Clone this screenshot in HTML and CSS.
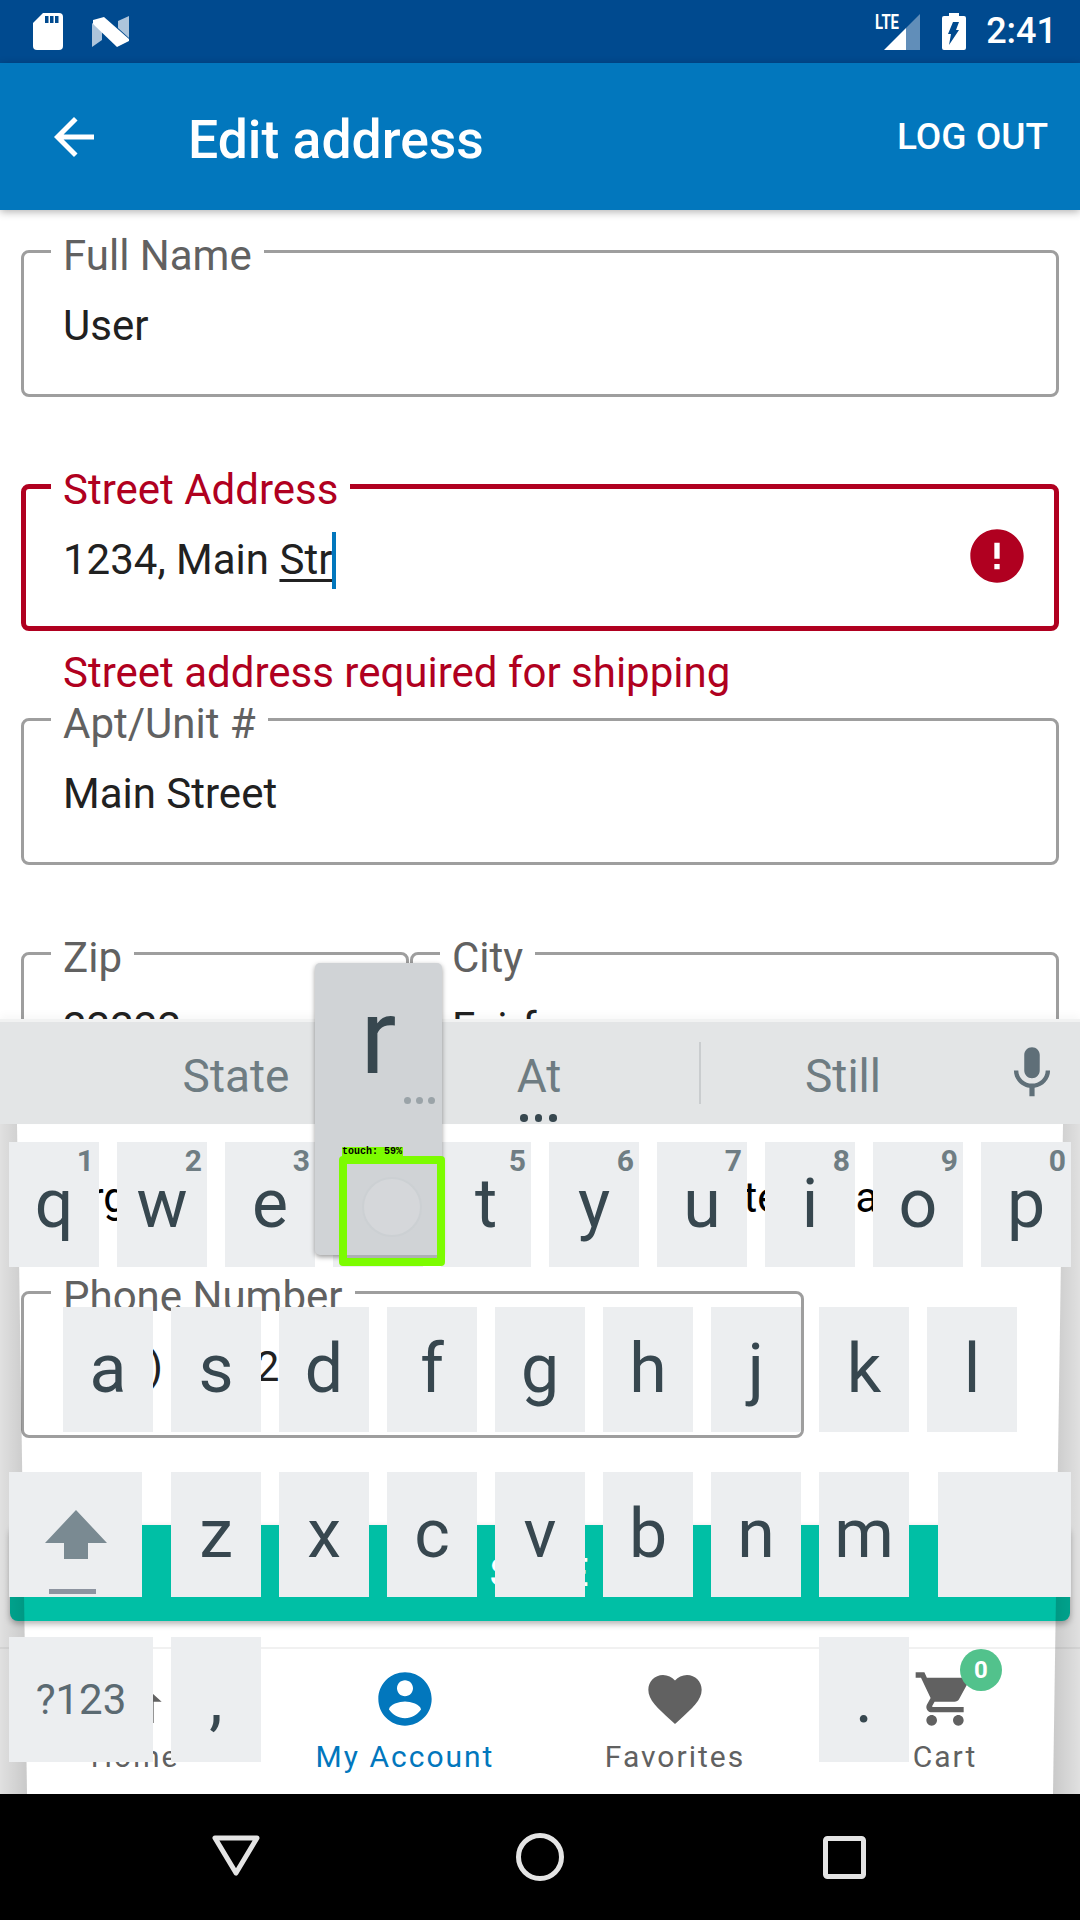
FILE: index.html
```html
<!DOCTYPE html>
<html lang="en">
<head>
<meta charset="utf-8">
<title>Edit address</title>
<link rel="stylesheet" href="styles.css">
</head>
<body>
<div class="screen">
  <div class="status">
    <svg class="ic-sd" viewBox="0 0 30 37"><path fill="#fff" d="M10 0h16a4 4 0 0 1 4 4v29a4 4 0 0 1-4 4H4a4 4 0 0 1-4-4V10z"/><path fill="#004a8f" d="M12 3h3.5v7H12zM17 3h3.5v7H17zM22 3h3.5v7H22z"/></svg>
    <svg class="ic-n" viewBox="0 0 37 31"><polygon fill="#fff" opacity=".68" points="0,7 10,14 10,24 0,31"/><polygon fill="#fff" opacity=".68" points="26,5 37,0 37,22 26,12"/><polygon fill="#fff" points="1,4 12,1 37,23 37,25 25,31 1,8"/></svg>
    <div class="status-right">
      <svg class="ic-lte" viewBox="0 0 45 38"><text x="0" y="16" textLength="24" lengthAdjust="spacingAndGlyphs" class="lte-text">LTE</text><polygon fill="#fff" points="9,37 31,15 31,37"/><polygon fill="#fff" opacity=".38" points="31,15 45,1 45,37 31,37"/></svg>
      <svg class="ic-bat" viewBox="0 0 24 37"><path fill="#fff" d="M7 0h10v3h5a2 2 0 0 1 2 2v30a2 2 0 0 1-2 2H2a2 2 0 0 1-2-2V5a2 2 0 0 1 2-2h5z"/><polygon fill="#004a8f" points="11,9 17,9 14,17 17,17 7,32 9,21 6,21"/></svg>
      <span class="time">2:41</span>
    </div>
  </div>

  <header class="appbar">
    <svg class="ic-back" viewBox="0 0 24 24"><path fill="#fff" d="M20 11H7.83l5.59-5.59L12 4l-8 8 8 8 1.41-1.41L7.83 13H20v-2z"/></svg>
    <h1 class="title">Edit address</h1>
    <span class="logout">LOG OUT</span>
  </header>

  <main class="form">
    <div class="field"><span class="label">Full Name</span><div class="value">User</div></div>
    <div class="field field-error">
      <span class="label">Street Address</span>
      <div class="value">1234, Main <span class="composing">Str<span class="caret"></span></span></div>
      <svg class="ic-error" viewBox="0 0 24 24"><path fill="#b00020" d="M12 2C6.48 2 2 6.48 2 12s4.48 10 10 10 10-4.48 10-10S17.52 2 12 2zm1 15h-2v-2h2v2zm0-4h-2V7h2v6z"/></svg>
    </div>
    <div class="error-text">Street address required for shipping</div>
    <div class="field"><span class="label">Apt/Unit #</span><div class="value">Main Street</div></div>
    <div class="pair">
      <div class="field field-zip"><span class="label">Zip</span><div class="value">22222</div></div>
      <div class="field field-city"><span class="label">City</span><div class="value">Fairfax</div></div>
    </div>
    <div class="plain-row"><span>Argyle</span><span>States in a</span></div>
    <div class="field field-phone"><span class="label">Phone Number</span><div class="value">(222) 222-222</div></div>
    <button class="save">SAVE</button>
  </main>

  <nav class="tabs">
    <div class="tab">
      <svg class="tab-ic" viewBox="0 0 24 24"><path d="M10 21v-6h4v6h5v-8h3L12 4 2 13h3v8z"/></svg>
      <span>Home</span>
    </div>
    <div class="tab tab-active">
      <svg class="tab-ic" viewBox="0 0 24 24"><path d="M12 2C6.48 2 2 6.48 2 12s4.48 10 10 10 10-4.48 10-10S17.52 2 12 2zm0 3c1.66 0 3 1.34 3 3s-1.34 3-3 3-3-1.34-3-3 1.34-3 3-3zm0 14.2c-2.5 0-4.71-1.28-6-3.22.03-1.99 4-3.08 6-3.08 1.99 0 5.97 1.09 6 3.08-1.29 1.94-3.5 3.22-6 3.22z"/></svg>
      <span>My Account</span>
    </div>
    <div class="tab">
      <svg class="tab-ic" viewBox="0 0 24 24"><path d="M12 21.35l-1.45-1.32C5.4 15.36 2 12.28 2 8.5 2 5.42 4.42 3 7.5 3c1.74 0 3.41.81 4.5 2.09C13.09 3.81 14.76 3 16.5 3 19.58 3 22 5.42 22 8.5c0 3.78-3.4 6.86-8.55 11.54L12 21.35z"/></svg>
      <span>Favorites</span>
    </div>
    <div class="tab">
      <svg class="tab-ic" viewBox="0 0 24 24"><path d="M7 18c-1.1 0-1.99.9-1.99 2S5.9 22 7 22s2-.9 2-2-.9-2-2-2zM1 2v2h2l3.6 7.59-1.35 2.45c-.16.28-.25.61-.25.96 0 1.1.9 2 2 2h12v-2H7.42c-.14 0-.25-.11-.25-.25l.03-.12.9-1.63h7.45c.75 0 1.41-.41 1.75-1.03l3.58-6.49c.08-.14.12-.31.12-.48 0-.55-.45-1-1-1H5.21l-.94-2H1zm16 16c-1.1 0-1.99.9-1.99 2s.89 2 1.99 2 2-.9 2-2-.9-2-2-2z"/></svg>
      <span>Cart</span>
      <span class="badge">0</span>
    </div>
  </nav>

  <div class="keyboard">
    <div class="edge edge-left"></div>
    <div class="edge edge-right"></div>
    <div class="suggest">
      <span class="sug sug-a">State</span>
      <span class="sug sug-b">At<i class="sug-dots"><b></b><b></b><b></b></i></span>
      <span class="sug-div"></span>
      <span class="sug sug-c">Still</span>
      <span class="sug-mic"><svg viewBox="0 0 24 24"><path d="M12 14c1.66 0 2.99-1.34 2.99-3L15 5c0-1.66-1.34-3-3-3S9 3.34 9 5v6c0 1.66 1.34 3 3 3zm5.3-3c0 3-2.54 5.1-5.3 5.1S6.7 14 6.7 11H5c0 3.41 2.72 6.23 6 6.72V21h2v-3.28c3.28-.48 6-3.3 6-6.72h-1.7z"/></svg></span>
    </div>
    <div class="keys">
      <div class="row row-1">
        <div class="key">q<span class="hint">1</span></div>
        <div class="key">w<span class="hint">2</span></div>
        <div class="key">e<span class="hint">3</span></div>
        <div class="key">r<span class="hint">4</span></div>
        <div class="key">t<span class="hint">5</span></div>
        <div class="key">y<span class="hint">6</span></div>
        <div class="key">u<span class="hint">7</span></div>
        <div class="key">i<span class="hint">8</span></div>
        <div class="key">o<span class="hint">9</span></div>
        <div class="key">p<span class="hint">0</span></div>
      </div>
      <div class="row row-2">
        <div class="key">a</div><div class="key">s</div><div class="key">d</div><div class="key">f</div><div class="key">g</div><div class="key">h</div><div class="key">j</div><div class="key">k</div><div class="key">l</div>
      </div>
      <div class="row row-3">
        <div class="key key-shift">
          <svg class="ic-shift" viewBox="0 0 62 49"><polygon fill="#7a8a92" points="31,0 62,33 43,33 43,49 19,49 19,33 0,33"/></svg>
          <span class="shift-line"></span>
        </div>
        <div class="key">z</div><div class="key">x</div><div class="key">c</div><div class="key">v</div><div class="key">b</div><div class="key">n</div><div class="key">m</div>
        <div class="key key-back"></div>
      </div>
      <div class="row row-4">
        <div class="key key-sym">?123</div>
        <div class="key">,</div>
        <div class="key-space"></div>
        <div class="key">.</div>
      </div>
    </div>
    <div class="popup">
      <span class="popup-letter">r</span>
      <span class="popup-dots"><b></b><b></b><b></b></span>
    </div>
    <div class="touch">
      <span class="touch-label">touch: 59%</span>
      <span class="touch-dot"></span>
    </div>
  </div>

  <div class="sysnav">
    <svg class="sys-back" viewBox="0 0 48 41"><path d="M3 3h42L24 38z"/></svg>
    <svg class="sys-home" viewBox="0 0 48 48"><circle cx="24" cy="24" r="21.5"/></svg>
    <svg class="sys-recent" viewBox="0 0 43 43"><rect x="2.5" y="2.5" width="38" height="38" rx="2"/></svg>
  </div>
</div>
</body>
</html>
```
FILE: styles.css
```css
* { box-sizing: border-box; }
html, body { margin: 0; padding: 0; background: #fff; }
body { font-family: Roboto, "Noto Sans", sans-serif; }

.screen {
  position: relative;
  width: 1080px;
  height: 1920px;
  overflow: hidden;
  display: flex;
  flex-direction: column;
  background: #fff;
}

/* status bar */
.status {
  height: 63px;
  flex: none;
  background: #004a8f;
  display: flex;
  align-items: center;
  padding: 0 23px 0 33px;
}
.ic-sd { width: 30px; height: 37px; margin-right: 29px; }
.ic-n { width: 37px; height: 31px; }
.status-right { margin-left: auto; display: flex; align-items: center; }
.ic-lte { width: 45px; height: 38px; overflow: visible; }
.lte-text { font: 700 20px Roboto, sans-serif; fill: #fff; }
.ic-bat { width: 24px; height: 37px; margin-left: 22px; }
.time { font-size: 36px; font-weight: 500; color: #fff; margin-left: 20px; line-height: 63px; }

/* app bar */
.appbar {
  position: relative;
  z-index: 2;
  height: 147px;
  flex: none;
  background: #0277bd;
  box-shadow: 0 2px 8px rgba(0, 0, 0, .3);
  display: flex;
  align-items: center;
  padding: 0 32px 0 44px;
  color: #fff;
}
.ic-back { width: 60px; height: 60px; margin-right: 84px; }
.title { margin: 6px 0 0; font-size: 53.5px; font-weight: 500; line-height: 60px; }
.logout { margin-left: auto; font-size: 37px; font-weight: 500; }

/* form */
.form {
  flex: 1;
  min-height: 0;
  overflow: hidden;
  padding: 40px 21px 0;
}
.field {
  position: relative;
  height: 147px;
  border: 3px solid #9e9e9e;
  border-radius: 8px;
  padding: 52px 0 0 39px;
  margin-bottom: 87px;
}
.label {
  position: absolute;
  left: 27px;
  top: -18px;
  padding: 0 12px;
  background: #fff;
  font-size: 42px;
  line-height: 42px;
  color: #616161;
}
.value { font-size: 42px; line-height: 42px; color: #212121; white-space: nowrap; }
.field-error {
  border: 5px solid #b00020;
  padding: 50px 0 0 37px;
  margin: 0;
}
.field-error .label { left: 25px; top: -20px; color: #b00020; }
.composing {
  position: relative;
  text-decoration: underline;
  text-decoration-thickness: 3px;
  text-underline-offset: 5px;
}
.caret {
  position: absolute;
  left: 100%;
  top: -3px;
  width: 4px;
  height: 57px;
  background: #0277bd;
}
.ic-error { position: absolute; right: 25px; top: 35px; width: 64px; height: 64px; }
.error-text {
  height: 87px;
  padding: 21px 0 0 42px;
  font-size: 42px;
  line-height: 42px;
  color: #b00020;
}
.pair { display: flex; gap: 1px; }
.field-zip { width: 388px; margin-bottom: 0; }
.field-city { flex: 1; margin-bottom: 0; }
.plain-row {
  height: 192px;
  padding: 78px 0 0 41px;
  display: grid;
  grid-template-columns: 620px 1fr;
  font-size: 42px;
  line-height: 42px;
  color: #000;
  white-space: nowrap;
}
.field-phone { width: 783px; }
.save {
  display: block;
  width: 1060px;
  height: 96px;
  margin: 0 0 0 -11px;
  border: 0;
  border-radius: 8px;
  background: #00bfa5;
  box-shadow: 0 3px 6px rgba(0, 0, 0, .3);
  font: 500 38px Roboto, sans-serif;
  letter-spacing: 2px;
  color: #fff;
}

/* bottom tabs */
.tabs {
  height: 147px;
  flex: none;
  display: flex;
  background: #fff;
  border-top: 2px solid #f1f1f1;
}
.tab {
  position: relative;
  flex: 1;
  display: flex;
  flex-direction: column;
  align-items: center;
  padding-top: 18px;
  font-size: 30px;
  letter-spacing: 2px;
  line-height: 34px;
  color: #616161;
}
.tab-ic { width: 64px; height: 64px; fill: #616161; margin-bottom: 9px; }
.tab-active { color: #0277bd; }
.tab-active .tab-ic { fill: #0277bd; }
.badge {
  position: absolute;
  left: 150px;
  top: 0;
  width: 42px;
  height: 42px;
  border-radius: 50%;
  background: #52c28c;
  color: #fff;
  font-size: 24px;
  font-weight: 700;
  line-height: 42px;
  text-align: center;
  letter-spacing: 0;
}

/* keyboard overlay */
.keyboard {
  position: absolute;
  left: 0;
  top: 1019px;
  width: 1080px;
  height: 775px;
}
.edge { position: absolute; top: 105px; bottom: 0; width: 27px; }
.edge-left {
  left: 0;
  background: linear-gradient(to right, rgba(0,0,0,.12), rgba(0,0,0,.21));
  clip-path: polygon(0 0, 17px 0, 27px 100%, 0 100%);
}
.edge-right {
  right: 0;
  background: linear-gradient(to left, rgba(0,0,0,.12), rgba(0,0,0,.21));
  clip-path: polygon(10px 0, 100% 0, 100% 100%, 0 100%);
}
.suggest {
  position: relative;
  height: 105px;
  background: #e3e5e6;
  border-top: 3px solid #f1f2f2;
  box-shadow: 0 -4px 8px rgba(0, 0, 0, .03);
  display: flex;
  align-items: center;
  padding-left: 84px;
  color: #6e7c82;
}
.sug { font-size: 46px; text-align: center; padding-top: 6px; }
.sug-a { width: 304px; }
.sug-b { width: 302px; position: relative; }
.sug-c { width: 284px; }
.sug-div { width: 2px; height: 62px; margin: 0 0 0 9px; background: #cacdcf; }
.sug-dots {
  position: absolute;
  left: 132px;
  top: 71px;
  display: flex;
  gap: 7px;
}
.sug-dots b { width: 7.5px; height: 7.5px; border-radius: 50%; background: #37474f; }
.sug-mic { width: 94px; display: flex; justify-content: center; }
.sug-mic svg { width: 62px; height: 62px; fill: #5f6f78; }

.keys { padding-top: 18px; position: relative; }
.row { display: flex; gap: 18px; margin-bottom: 40px; }
.row-1, .row-3, .row-4 { padding-left: 9px; }
.row-2 { padding-left: 63px; }
.key {
  position: relative;
  flex: none;
  width: 90px;
  height: 125px;
  background: #eceef0;
  color: #37474f;
  font-size: 68px;
  line-height: 125px;
  text-align: center;
}
.hint {
  position: absolute;
  top: 4px;
  right: 5px;
  font-size: 30px;
  font-weight: 700;
  line-height: 30px;
  color: #6f7d83;
}
.key-shift { width: 133px; margin-right: 11px; }
.key-back { width: 133px; margin-left: 11px; }
.ic-shift { position: absolute; left: 36px; top: 38px; width: 62px; height: 49px; }
.shift-line { position: absolute; left: 40px; top: 117px; width: 47px; height: 5px; background: #8d94a0; }
.key-sym { width: 144px; font-size: 42px; color: #5b6a72; }
.key-space { width: 522px; flex: none; }

.popup {
  position: absolute;
  left: 315px;
  top: -56px;
  width: 127px;
  height: 292px;
  border-radius: 5px;
  background: #d0d3d6;
  box-shadow: 0 2px 5px rgba(0, 0, 0, .4);
  color: #37474f;
}
.popup-letter {
  position: absolute;
  left: 0;
  right: 0;
  top: 0;
  text-align: center;
  font-size: 106px;
  line-height: 148px;
}
.popup-dots { position: absolute; left: 89px; top: 134px; display: flex; gap: 5px; }
.popup-dots b { width: 7px; height: 7px; border-radius: 50%; background: #9aa3a8; }
.touch {
  position: absolute;
  left: 339px;
  top: 137px;
  width: 106px;
  height: 110px;
  border: 8px solid #7cfc00;
  border-radius: 4px;
  background: #d0d3d6;
  box-shadow: inset 0 -3px 0 #aeb0b3;
}
.touch-label {
  position: absolute;
  left: -5px;
  top: -17px;
  width: 61px;
  height: 11px;
  background: #7cfc00;
  font: 700 10px/10px "Liberation Mono", monospace;
  color: #000;
  white-space: nowrap;
}
.touch-dot {
  position: absolute;
  left: 15px;
  top: 13px;
  width: 60px;
  height: 60px;
  border-radius: 50%;
  background: #d5d7da;
  border: 2px solid #ccd0d3;
}

/* system navigation */
.sysnav {
  height: 126px;
  flex: none;
  background: #000;
  position: relative;
  z-index: 3;
  display: flex;
  align-items: center;
}
.sysnav svg { fill: none; stroke: #e4e4e4; stroke-width: 5px; stroke-linejoin: round; }
.sys-back { width: 48px; height: 41px; margin-left: 212px; margin-bottom: 4px; }
.sys-home { width: 48px; height: 48px; margin-left: 256px; }
.sys-recent { width: 43px; height: 43px; margin-left: 259px; }
```
